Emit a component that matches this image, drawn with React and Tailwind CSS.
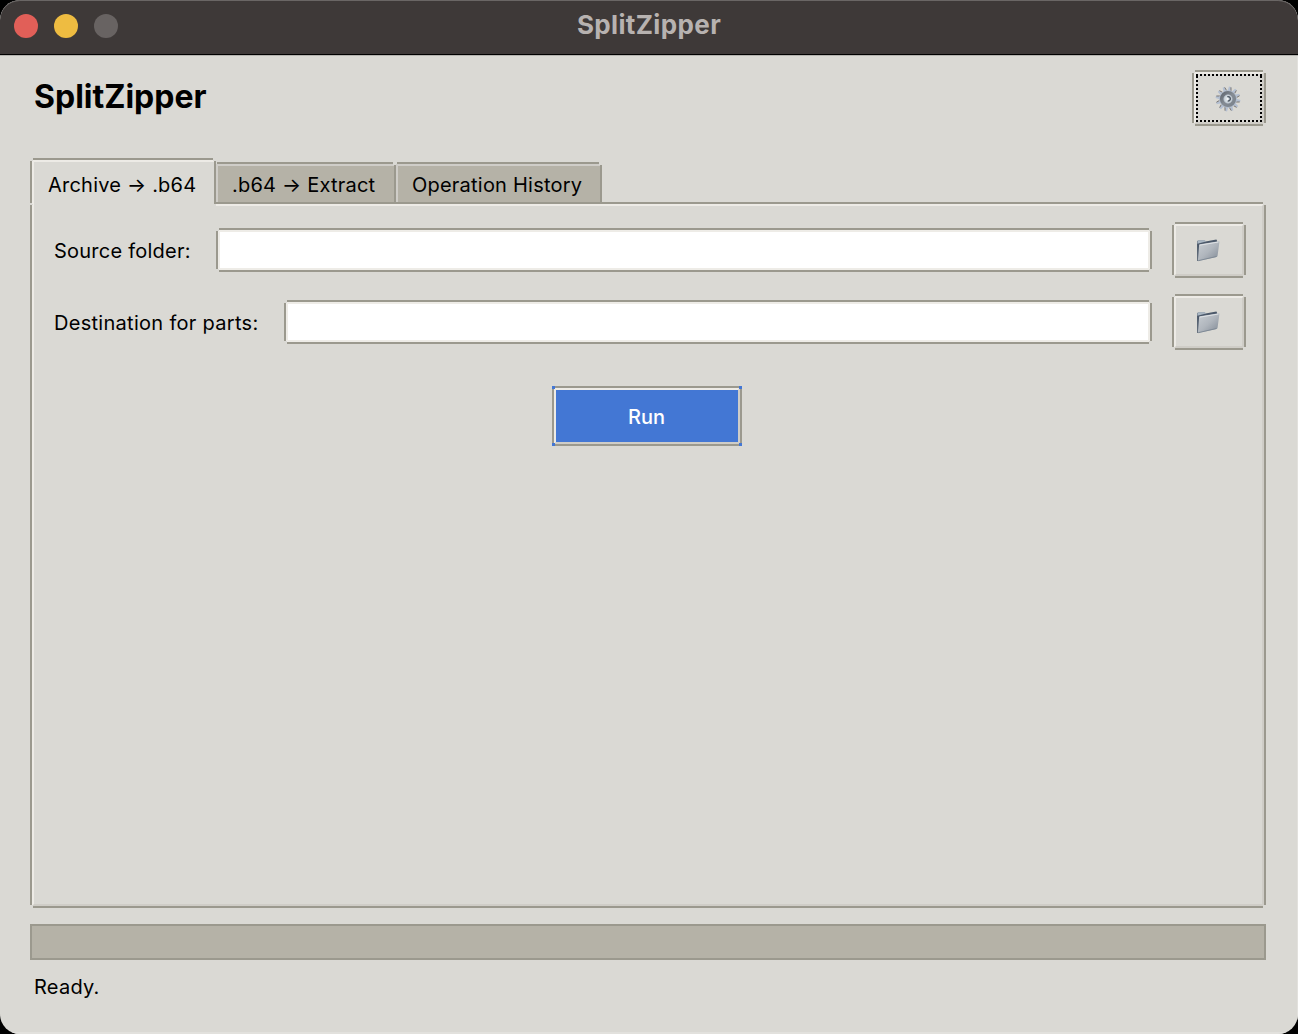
import React from "react";

const corner = "absolute size-[3px] bg-[#dad9d4]";

function Corners({ className = corner, bottom = true }) {
  return (
    <>
      <span className={`${className} -top-0.5 -left-0.5`} />
      <span className={`${className} -top-0.5 -right-0.5`} />
      {bottom && <span className={`${className} -bottom-0.5 -left-0.5`} />}
      {bottom && <span className={`${className} -bottom-0.5 -right-0.5`} />}
    </>
  );
}

function Gear() {
  return (
    <svg className="mr-0.5 mt-0.5 size-[26px]" viewBox="0 0 26 26" fill="none">
      <defs>
        <linearGradient id="gearRing" x1="0" y1="0" x2="1" y2="1">
          <stop offset="0" stopColor="#636a73" />
          <stop offset="0.5" stopColor="#858c94" />
          <stop offset="1" stopColor="#7b838d" />
        </linearGradient>
      </defs>
      {Array.from({ length: 12 }, (_, i) => (
        <g key={i} transform={`rotate(${i * 30 + 10} 13 13)`}>
          <path d="M11.2 5.5 L11.8 0.6 L13.8 0.6 L14.4 5.5Z" fill="#b4c0d2" />
          <path d="M13.9 1 L14.6 4.8" stroke="#77736f" strokeWidth="0.9" />
        </g>
      ))}
      <circle cx="13" cy="13" r="9" fill="#b3bdcc" />
      <circle cx="13" cy="13" r="6.2" stroke="url(#gearRing)" strokeWidth="3.8" />
      <circle cx="13" cy="13" r="4.2" fill="#d3dbe1" stroke="#a5afb9" strokeWidth="0.7" />
      <path d="M12.3 10.9a2.1 2.1 0 1 1 .4 3.9" stroke="#505a66" strokeWidth="1.5" />
      <path d="M12.4 11.8v2.5" stroke="#f4f6f7" strokeWidth="1.5" />
    </svg>
  );
}

function Folder() {
  return (
    <svg className="mr-0.5 size-6" viewBox="0 0 24 24">
      <defs>
        <linearGradient id="folderFace" x1="0" y1="0" x2="1" y2="1">
          <stop offset="0" stopColor="#c9ced3" />
          <stop offset="0.5" stopColor="#b0b6bd" />
          <stop offset="1" stopColor="#7f8894" />
        </linearGradient>
      </defs>
      <path d="M1 3.4 2 2.4h6.6l1 1L20.4 1.4l.7 1.4v4L3.2 23H1.2Z" fill="#4c596a" />
      <path d="M1.4 3.4 2.2 2.2h6.8l1 1.4-8.6 2.2Z" fill="#a9b6c2" />
      <path d="M4 6.3 22.7 3.2c.6 0 .8.3.7.9l-1.8 13.4c-.1.8-.5 1.2-1.2 1.4L2.5 23c-.5.1-.7-.1-.6-.7L3.1 7.3c.1-.6.3-.9.9-1Z" fill="url(#folderFace)" />
      <path d="M3.6 7.2 22.6 4" stroke="#dfe2e5" strokeWidth="1" fill="none" />
      <path d="M2.2 22.7 20.5 18.5" stroke="#7b8692" strokeWidth="0.9" fill="none" />
    </svg>
  );
}

function IconButton({ children, focused, label }) {
  return (
    <button aria-label={label} className="relative h-14 w-[74px] shrink-0 border-2 border-[#9b998e]">
      <span className="flex size-full items-center justify-center border-2 border-t-[#edebe6] border-r-[#cfcdc7] border-b-[#cfcdc7] border-l-[#edebe6]">
        {focused ? (
          <span className="flex size-full items-center justify-center bg-[repeating-linear-gradient(90deg,#000_0_2px,transparent_2px_4px),repeating-linear-gradient(90deg,#000_0_2px,transparent_2px_4px),repeating-linear-gradient(0deg,#000_0_2px,transparent_2px_4px),repeating-linear-gradient(0deg,#000_0_2px,transparent_2px_4px)] bg-[length:100%_2px,100%_2px,2px_100%,2px_100%] bg-[position:top,bottom,left,right] bg-no-repeat">
            {children}
          </span>
        ) : children}
      </span>
      <Corners />
    </button>
  );
}

function Field({ label, labelClass }) {
  return (
    <div className="flex h-14 items-center">
      <label className={`${labelClass} shrink-0 pt-0.5 pl-1 whitespace-nowrap`}>{label}</label>
      <div className="relative h-11 grow border-2 border-[#9b998e]">
        <div className="size-full border-2 border-[#eeece7] bg-white" />
        <Corners />
      </div>
      <div className="ml-5">
        <IconButton label="Browse"><Folder /></IconButton>
      </div>
    </div>
  );
}

function Tab({ children, className }) {
  return (
    <div className={`${className} relative h-10 border-t-2 border-r-2 border-[#9b998e]`}>
      <div className="flex h-full items-center border-t-2 border-l-2 border-[#cfcdc8] bg-[#b5b2a7] pt-0.5 pl-3.5 whitespace-nowrap">
        {children}
      </div>
      <span className="absolute -top-0.5 left-0 h-0.5 w-px bg-[#dad9d4]" />
      <span className="absolute -top-0.5 -right-0.5 size-[3px] bg-[#dad9d4]" />
    </div>
  );
}

export default function App() {
  return (
    <div className="h-[1034px] w-[1298px] bg-black">
      <div className="flex h-full flex-col overflow-hidden rounded-[20px] bg-[#dad9d4] font-['Inter',sans-serif] text-[20px] text-black">
        <header className="grid h-[55px] shrink-0 grid-cols-[1fr_auto_1fr] items-center rounded-t-[20px] border-b border-black bg-[#3e3938] shadow-[inset_0_1px_0_#6a6665]">
          <div className="flex gap-4 pl-3.5 pb-0.5">
            <span className="size-6 rounded-full bg-[#e15f58]" />
            <span className="size-6 rounded-full bg-[#eebc41]" />
            <span className="size-6 rounded-full bg-[#686362]" />
          </div>
          <div className="pb-1 text-[26px] leading-none font-bold tracking-[0.36px] text-[#b7b2b0]">SplitZipper</div>
        </header>

        <main className="flex grow flex-col border-t border-[#b4b3af] px-[30px] shadow-[inset_-1px_-2px_0_#e2e1dd] pr-8">
          <div className="mt-3.5 flex h-14 justify-between">
            <h1 className="pt-1.5 pl-1 text-[32px] leading-[42px] font-bold">SplitZipper</h1>
            <IconButton focused label="Settings"><Gear /></IconButton>
          </div>

          <div className="mt-8 flex h-11 items-end tracking-[0.22px]">
            <div className="relative z-10 -mb-0.5 h-[46px] w-[186px] shrink-0 border-x-2 border-t-2 border-[#9b998e] bg-[#dad9d4]">
              <div className="flex h-full items-center border-t-2 border-l-2 border-[#edebe6] pl-3.5 pt-1 whitespace-nowrap">Archive → .b64</div>
              <Corners bottom={false} />
              <span className="absolute bottom-0 -left-0.5 h-px w-0.5 bg-[#dad9d4]" />
              <span className="absolute -bottom-0.5 left-0.5 h-0.5 w-[182px] bg-[#dad9d4]" />
            </div>
            <Tab className="w-[180px]">.b64 → Extract</Tab>
            <Tab className="w-[206px]">Operation History</Tab>
          </div>

          <section className="relative h-[706px] border-2 border-[#9b998e]">
            <div className="flex size-full flex-col border-2 border-t-[#edebe6] border-r-[#cfcdc7] border-b-[#cfcdc7] border-l-[#edebe6] px-4 pt-4">
              <Field label="Source folder:" labelClass="w-[166px] tracking-[0.23px]" />
              <div className="mt-4">
                <Field label="Destination for parts:" labelClass="w-[234px] tracking-[0.29px]" />
              </div>
              <button className="relative mt-9 ml-[502px] h-[60px] w-[190px] border-2 border-[#9b998e] bg-[#4377d4] font-medium text-white">
                <span className="flex size-full items-center justify-center border-2 border-t-[#edebe6] border-r-[#cfcdc7] border-b-[#cfcdc7] border-l-[#edebe6] pt-0.5 pr-px">Run</span>
                <Corners className="absolute size-[3px] bg-[#4377d4]" />
              </button>
            </div>
            <Corners />
          </section>

          <div className="mt-4 h-9 border-2 border-[#9b998e] bg-[#b5b2a7]" />
          <p className="mt-3 pl-1 leading-[30px] tracking-[0.25px]">Ready.</p>
        </main>
      </div>
    </div>
  );
}
